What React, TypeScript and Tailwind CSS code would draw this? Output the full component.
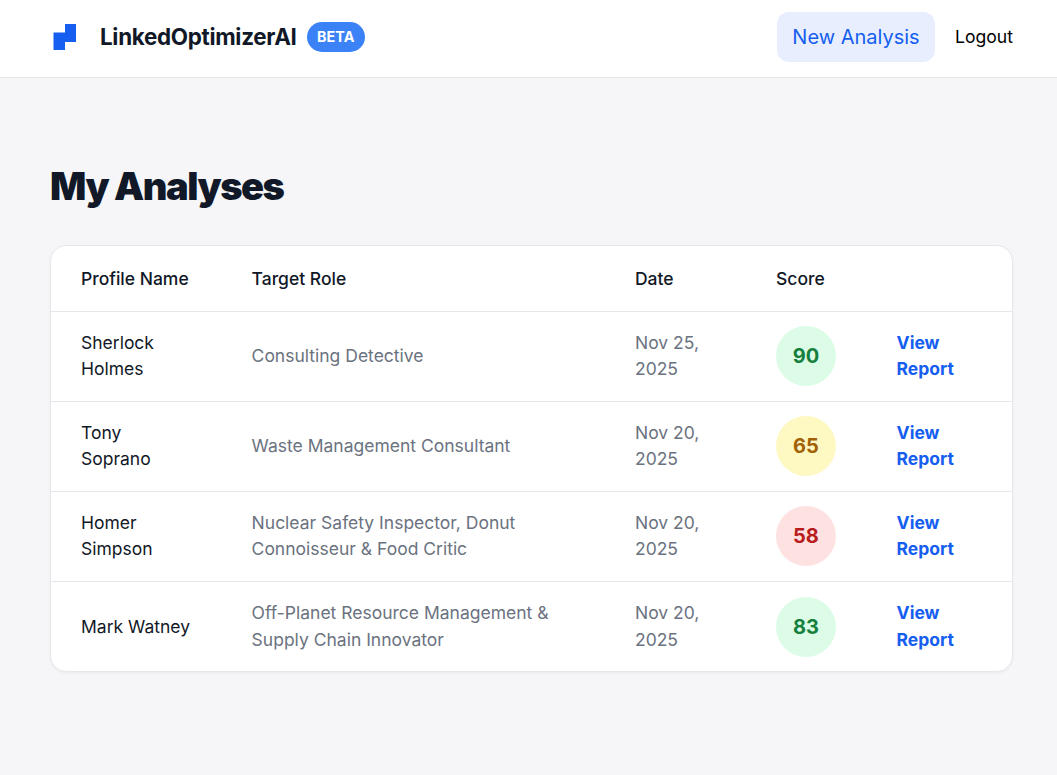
import React from 'react';

const rows = [
  { name: 'Sherlock Holmes', role: 'Consulting Detective', date: 'Nov 25, 2025', score: 90, tone: 'bg-[#dcfce7] text-[#15803d]' },
  { name: 'Tony Soprano', role: 'Waste Management Consultant', date: 'Nov 20, 2025', score: 65, tone: 'bg-[#fef9c3] text-[#a16207]' },
  { name: 'Homer Simpson', role: 'Nuclear Safety Inspector, Donut Connoisseur & Food Critic', date: 'Nov 20, 2025', score: 58, tone: 'bg-[#fee2e2] text-[#b91c1c]' },
  { name: 'Mark Watney', role: 'Off-Planet Resource Management & Supply Chain Innovator', date: 'Nov 20, 2025', score: 83, tone: 'bg-[#dcfce7] text-[#15803d]' },
];

const Logo = () => (
  <svg width="24" height="26" viewBox="0 0 24 26" className="shrink-0">
    <path d="M13 0H24V18H13V26H1.5V8.5H13Z" fill="#155eef" />
  </svg>
);

export default function App() {
  return (
    <div className="min-h-[775px] bg-[#f6f6f9] font-['Inter',sans-serif] text-[17.5px] leading-[26.4px] text-[#111827]">
      <header className="flex h-[78px] items-center justify-between border-b border-[#e5e7eb] bg-white pb-[3px] pl-[52px] pr-[44px]">
        <div className="flex items-center">
          <Logo />
          <span className="ml-[24px] text-[22.4px] font-bold tracking-[-0.3px]">LinkedOptimizerAI</span>
          <span className="ml-[10px] rounded-full bg-[#3b82f6] px-[10.5px] py-[2px] text-[14.4px] font-bold text-white">BETA</span>
        </div>
        <nav className="flex items-center gap-5">
          <a className="flex h-[50px] w-[158px] items-center justify-center rounded-xl bg-[#e8eefd] text-[20px] text-[#155eef]">New Analysis</a>
          <a className="text-[17.6px] font-normal text-black">Logout</a>
        </nav>
      </header>
      <main className="pl-[50px] pr-[44px] pt-[84px]">
        <h1 className="text-[38px] font-black leading-[48px] tracking-[-1.5px] text-[#111827]">My Analyses</h1>
        <div className="mt-[35px] overflow-hidden rounded-2xl border border-[#e5e7eb] bg-white shadow-[0_1px_3px_rgba(0,0,0,0.05)]">
          <table className="w-full table-fixed border-collapse text-left">
            <colgroup>
              <col className="w-[170.6px]" />
              <col className="w-[383.4px]" />
              <col className="w-[141px]" />
              <col className="w-[120.6px]" />
              <col className="w-[145.4px]" />
            </colgroup>
            <thead>
              <tr className="h-[65px]">
                <th className="px-[30px] pt-[2px] font-medium">Profile Name</th>
                <th className="px-[30px] pt-[2px] font-medium">Target Role</th>
                <th className="px-[30px] pt-[2px] font-medium">Date</th>
                <th className="px-[30px] pt-[2px] font-medium">Score</th>
                <th className="px-[30px] pt-[2px] font-medium"></th>
              </tr>
            </thead>
            <tbody>
              {rows.map((r, i) => {
                const pad = i === rows.length - 1 ? 'px-[30px] pt-[1px]' : 'px-[30px]';
                return (
                  <tr key={r.name} className="h-[90px] border-t border-[#e5e7eb]">
                    <td className={pad}>{r.name}</td>
                    <td className={`${pad} text-[#6b7280]`}>{r.role}</td>
                    <td className={`${pad} text-[#6b7280]`}>{r.date}</td>
                    <td className={pad}>
                      <div className={`flex h-[60px] w-[60px] items-center justify-center rounded-full text-[20px] font-bold ${r.tone}`}>{r.score}</div>
                    </td>
                    <td className={pad}>
                      <a className="font-bold text-[#155eef]">View Report</a>
                    </td>
                  </tr>
                );
              })}
            </tbody>
          </table>
        </div>
      </main>
    </div>
  );
}
